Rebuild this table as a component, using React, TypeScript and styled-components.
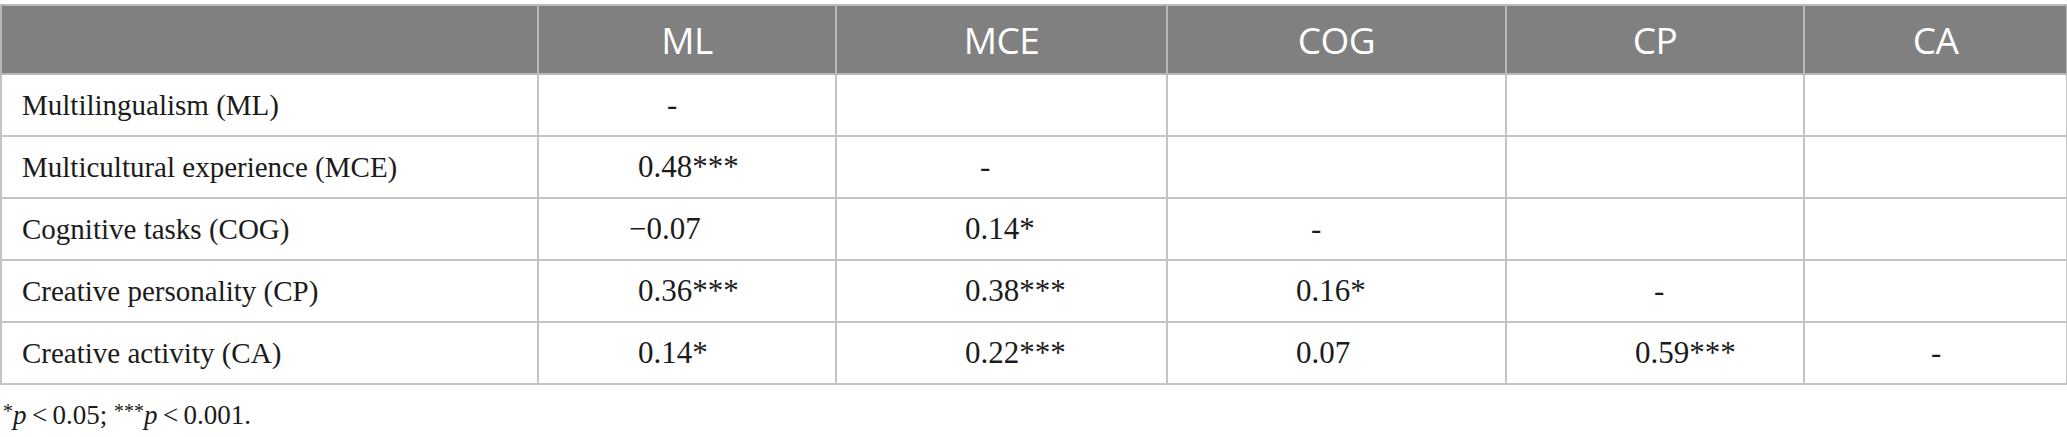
import React from "react";
import styled, { createGlobalStyle } from "styled-components";

const GlobalStyle = createGlobalStyle`
  html, body { margin: 0; padding: 0; background: #ffffff; }
  body { width: 2067px; overflow: hidden; }
`;

const Page = styled.div`
  padding-top: 4px;
  width: 2067px;
  box-sizing: border-box;
`;

const Table = styled.table`
  width: 2066px;
  border-collapse: collapse;
  table-layout: fixed;
`;

const Col = styled.col<{ $w: number }>`
  width: ${(p) => p.$w}px;
`;

const HeadRow = styled.tr`
  height: 69px;
  background: #808080;
`;

const HeadCell = styled.th`
  border: 2px solid #b9b9b9;
  color: #ffffff;
  font-family: "Open Sans", "Noto Sans", sans-serif;
  font-weight: 400;
  font-size: 37px;
  text-align: center;
  padding: 0;
  letter-spacing: -0.5px;
`;

const BodyRow = styled.tr`
  height: 62px;
`;

const LabelCell = styled.td`
  border: 2px solid #c4c4c4;
  font-family: "Liberation Serif", "Times New Roman", serif;
  font-size: 29px;
  color: #1b1b1b;
  padding: 0 0 0 20px;
  white-space: nowrap;
`;

const ValueCell = styled.td<{ $indent: number }>`
  border: 2px solid #c4c4c4;
  font-family: "Liberation Serif", "Times New Roman", serif;
  font-size: 31px;
  color: #1b1b1b;
  padding: 0 0 0 ${(p) => p.$indent}px;
  white-space: nowrap;
`;

const Note = styled.p`
  margin: 15px 0 0 3px;
  font-family: "Liberation Serif", "Times New Roman", serif;
  font-size: 27px;
  color: #1b1b1b;
`;

const Star = styled.sup`
  font-size: 20px;
  vertical-align: 6px;
  line-height: 0;
`;

const P = styled.i`
  font-style: italic;
`;

const columns = ["ML", "MCE", "COG", "CP", "CA"];
const widths = [537, 298, 331, 339, 298, 263];

type Cell = { text: string; indent: number } | null;

const rows: { label: string; cells: Cell[] }[] = [
  {
    label: "Multilingualism (ML)",
    cells: [{ text: "-", indent: 128 }, null, null, null, null],
  },
  {
    label: "Multicultural experience (MCE)",
    cells: [{ text: "0.48***", indent: 99 }, { text: "-", indent: 143 }, null, null, null],
  },
  {
    label: "Cognitive tasks (COG)",
    cells: [
      { text: "\u22120.07", indent: 90 },
      { text: "0.14*", indent: 128 },
      { text: "-", indent: 143 },
      null,
      null,
    ],
  },
  {
    label: "Creative personality (CP)",
    cells: [
      { text: "0.36***", indent: 99 },
      { text: "0.38***", indent: 128 },
      { text: "0.16*", indent: 128 },
      { text: "-", indent: 147 },
      null,
    ],
  },
  {
    label: "Creative activity (CA)",
    cells: [
      { text: "0.14*", indent: 99 },
      { text: "0.22***", indent: 128 },
      { text: "0.07", indent: 128 },
      { text: "0.59***", indent: 128 },
      { text: "-", indent: 126 },
    ],
  },
];

export default function App() {
  return (
    <Page>
      <GlobalStyle />
      <Table>
        <colgroup>
          {widths.map((w, i) => (
            <Col key={i} $w={w} />
          ))}
        </colgroup>
        <thead>
          <HeadRow>
            <HeadCell />
            {columns.map((c) => (
              <HeadCell key={c}>{c}</HeadCell>
            ))}
          </HeadRow>
        </thead>
        <tbody>
          {rows.map((r) => (
            <BodyRow key={r.label}>
              <LabelCell>{r.label}</LabelCell>
              {r.cells.map((c, i) => (
                <ValueCell key={i} $indent={c ? c.indent : 0}>
                  {c ? c.text : ""}
                </ValueCell>
              ))}
            </BodyRow>
          ))}
        </tbody>
      </Table>
      <Note>
        <Star>*</Star>
        <P>p</P>{"\u2009<\u20090.05; "}
        <Star>***</Star>
        <P>p</P>{"\u2009<\u20090.001."}
      </Note>
    </Page>
  );
}
